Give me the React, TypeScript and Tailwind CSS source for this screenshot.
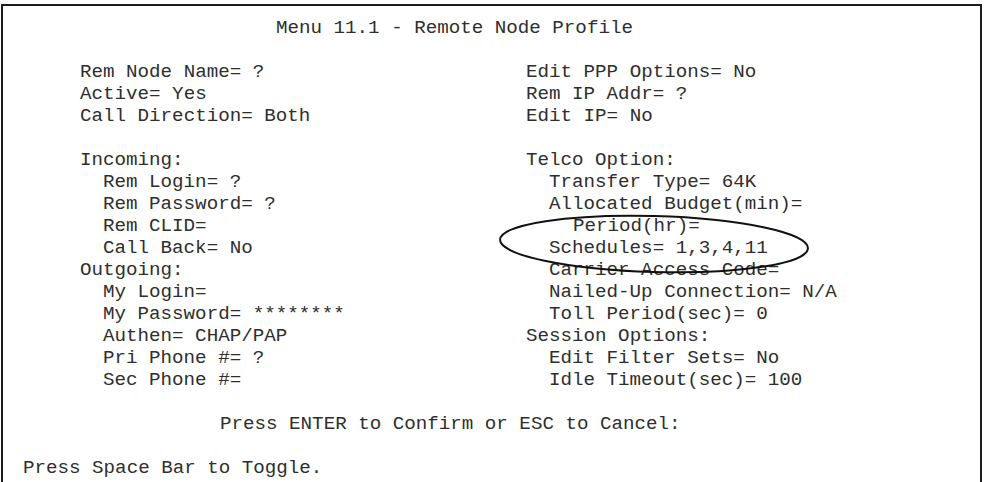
const left: { text: string; indent?: number }[] = [
  { text: "Rem Node Name= ?" },
  { text: "Active= Yes" },
  { text: "Call Direction= Both" },
  { text: "" },
  { text: "Incoming:" },
  { text: "Rem Login= ?", indent: 1 },
  { text: "Rem Password= ?", indent: 1 },
  { text: "Rem CLID=", indent: 1 },
  { text: "Call Back= No", indent: 1 },
  { text: "Outgoing:" },
  { text: "My Login=", indent: 1 },
  { text: "My Password= ********", indent: 1 },
  { text: "Authen= CHAP/PAP", indent: 1 },
  { text: "Pri Phone #= ?", indent: 1 },
  { text: "Sec Phone #=", indent: 1 },
];

const right: { text: string; indent?: number }[] = [
  { text: "Edit PPP Options= No" },
  { text: "Rem IP Addr= ?" },
  { text: "Edit IP= No" },
  { text: "" },
  { text: "Telco Option:" },
  { text: "Transfer Type= 64K", indent: 1 },
  { text: "Allocated Budget(min)=", indent: 1 },
  { text: "Period(hr)=", indent: 2 },
  { text: "Schedules= 1,3,4,11", indent: 1 },
  { text: "Carrier Access Code=", indent: 1 },
  { text: "Nailed-Up Connection= N/A", indent: 1 },
  { text: "Toll Period(sec)= 0", indent: 1 },
  { text: "Session Options:" },
  { text: "Edit Filter Sets= No", indent: 1 },
  { text: "Idle Timeout(sec)= 100", indent: 1 },
];

function Line({ text, indent = 0 }: { text: string; indent?: number }) {
  const pad = indent === 2 ? "pl-[47px]" : indent === 1 ? "pl-[23px]" : "pl-0";
  return <div className={`h-[22px] leading-[22px] whitespace-pre ${pad}`}>{text || " "}</div>;
}

export default function App() {
  return (
    <div className="relative w-[984px] h-[482px] overflow-hidden bg-white">
      <div
        className="ml-[1px] mt-[4px] w-[981px] h-[520px] border-2 border-[#1c1c1c] pt-[11px] text-[19.2px] text-[#2e2e2e]"
        style={{ fontFamily: '"Liberation Mono", "Courier New", monospace' }}
      >
        <div className="h-[22px] leading-[22px] whitespace-pre pl-[273px]">Menu 11.1 - Remote Node Profile</div>
        <div className="h-[22px]" />
        <div className="flex">
          <div className="w-[523px] pl-[77px]">
            {left.map((l, i) => (
              <Line key={i} text={l.text} indent={l.indent} />
            ))}
          </div>
          <div>
            {right.map((l, i) => (
              <Line key={i} text={l.text} indent={l.indent} />
            ))}
          </div>
        </div>
        <div className="h-[22px]" />
        <div className="h-[22px] leading-[22px] whitespace-pre pl-[217px]">Press ENTER to Confirm or ESC to Cancel:</div>
        <div className="h-[22px]" />
        <div className="h-[22px] leading-[22px] whitespace-pre pl-[20px]">Press Space Bar to Toggle.</div>
      </div>

      <svg className="absolute left-0 top-0 pointer-events-none" width="984" height="482" viewBox="0 0 984 482">
        <ellipse cx="654" cy="244" rx="154" ry="28" transform="rotate(1.6 654 244)" fill="none" stroke="#111" strokeWidth="2" />
      </svg>
    </div>
  );
}
